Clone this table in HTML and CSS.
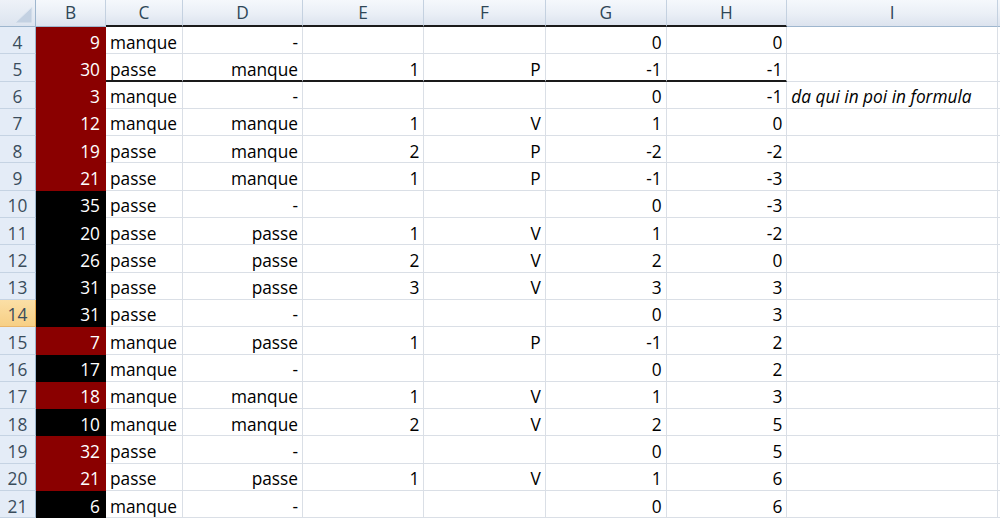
FILE: index.html
```html
<!DOCTYPE html>
<html lang="it">
<head>
<meta charset="utf-8">
<title>Foglio</title>
<link rel="stylesheet" href="styles.css">
</head>
<body>
<div class="sheet">
  <div class="corner"><svg width="36" height="27" viewBox="0 0 36 27"><polygon points="32,7 32,23 15,23" fill="#c3d1e2"/><polygon points="32,7 32,23 15,23" fill="none" stroke="#dfe7f1" stroke-width="1"/></svg></div>
  <div class="ch">B</div>
  <div class="ch k">C</div>
  <div class="ch k">D</div>
  <div class="ch k">E</div>
  <div class="ch k">F</div>
  <div class="ch k">G</div>
  <div class="ch k">H</div>
  <div class="ch">I</div>
  <div class="ch"></div>

  <div class="rh">4</div><div class="c b red">9</div><div class="c l">manque</div><div class="c">-</div><div class="c"></div><div class="c"></div><div class="c">0</div><div class="c">0</div><div class="c l"></div><div class="c"></div>
  <div class="rh">5</div><div class="c b red">30</div><div class="c l k2">passe</div><div class="c k2">manque</div><div class="c k2">1</div><div class="c k2">P</div><div class="c k2">-1</div><div class="c k2">-1</div><div class="c l"></div><div class="c"></div>
  <div class="rh">6</div><div class="c b red">3</div><div class="c l">manque</div><div class="c">-</div><div class="c"></div><div class="c"></div><div class="c">0</div><div class="c">-1</div><div class="c l it">da qui in poi in formula</div><div class="c"></div>
  <div class="rh">7</div><div class="c b red">12</div><div class="c l">manque</div><div class="c">manque</div><div class="c">1</div><div class="c">V</div><div class="c">1</div><div class="c">0</div><div class="c l"></div><div class="c"></div>
  <div class="rh">8</div><div class="c b red">19</div><div class="c l">passe</div><div class="c">manque</div><div class="c">2</div><div class="c">P</div><div class="c">-2</div><div class="c">-2</div><div class="c l"></div><div class="c"></div>
  <div class="rh">9</div><div class="c b red">21</div><div class="c l">passe</div><div class="c">manque</div><div class="c">1</div><div class="c">P</div><div class="c">-1</div><div class="c">-3</div><div class="c l"></div><div class="c"></div>
  <div class="rh">10</div><div class="c b blk">35</div><div class="c l">passe</div><div class="c">-</div><div class="c"></div><div class="c"></div><div class="c">0</div><div class="c">-3</div><div class="c l"></div><div class="c"></div>
  <div class="rh">11</div><div class="c b blk">20</div><div class="c l">passe</div><div class="c">passe</div><div class="c">1</div><div class="c">V</div><div class="c">1</div><div class="c">-2</div><div class="c l"></div><div class="c"></div>
  <div class="rh">12</div><div class="c b blk">26</div><div class="c l">passe</div><div class="c">passe</div><div class="c">2</div><div class="c">V</div><div class="c">2</div><div class="c">0</div><div class="c l"></div><div class="c"></div>
  <div class="rh">13</div><div class="c b blk">31</div><div class="c l">passe</div><div class="c">passe</div><div class="c">3</div><div class="c">V</div><div class="c">3</div><div class="c">3</div><div class="c l"></div><div class="c"></div>
  <div class="rh sel">14</div><div class="c b blk">31</div><div class="c l">passe</div><div class="c">-</div><div class="c"></div><div class="c"></div><div class="c">0</div><div class="c">3</div><div class="c l"></div><div class="c"></div>
  <div class="rh">15</div><div class="c b red">7</div><div class="c l">manque</div><div class="c">passe</div><div class="c">1</div><div class="c">P</div><div class="c">-1</div><div class="c">2</div><div class="c l"></div><div class="c"></div>
  <div class="rh">16</div><div class="c b blk">17</div><div class="c l">manque</div><div class="c">-</div><div class="c"></div><div class="c"></div><div class="c">0</div><div class="c">2</div><div class="c l"></div><div class="c"></div>
  <div class="rh">17</div><div class="c b red">18</div><div class="c l">manque</div><div class="c">manque</div><div class="c">1</div><div class="c">V</div><div class="c">1</div><div class="c">3</div><div class="c l"></div><div class="c"></div>
  <div class="rh">18</div><div class="c b blk">10</div><div class="c l">manque</div><div class="c">manque</div><div class="c">2</div><div class="c">V</div><div class="c">2</div><div class="c">5</div><div class="c l"></div><div class="c"></div>
  <div class="rh">19</div><div class="c b red">32</div><div class="c l">passe</div><div class="c">-</div><div class="c"></div><div class="c"></div><div class="c">0</div><div class="c">5</div><div class="c l"></div><div class="c"></div>
  <div class="rh">20</div><div class="c b red">21</div><div class="c l">passe</div><div class="c">passe</div><div class="c">1</div><div class="c">V</div><div class="c">1</div><div class="c">6</div><div class="c l"></div><div class="c"></div>
  <div class="rh">21</div><div class="c b blk">6</div><div class="c l">manque</div><div class="c">-</div><div class="c"></div><div class="c"></div><div class="c">0</div><div class="c">6</div><div class="c l"></div><div class="c"></div>
</div>
</body>
</html>
```

FILE: styles.css
```css
html, body {
  margin: 0;
  padding: 0;
  background: #ffffff;
  overflow: hidden;
}

.sheet {
  display: grid;
  grid-template-columns: 36px 70px 77px 120px 121.3px 121.4px 121px 120.6px 210.7px 1fr;
  grid-template-rows: 27px repeat(18, 27.3px);
  width: 1000px;
  height: 521px;
  overflow: hidden;
  font-family: "Open Sans", "Liberation Sans", sans-serif;
  font-size: 17.3px;
  color: #000;
}

.corner {
  box-sizing: border-box;
  background: linear-gradient(#eef2f8, #dce4ef);
  border-right: 1px solid #9eb6ce;
  border-bottom: 1px solid #9eb6ce;
}
.corner svg { display: block; }

.ch {
  box-sizing: border-box;
  background: linear-gradient(#f5f8fc 0%, #eaeff6 55%, #dce3ee 100%);
  border-right: 1px solid #c4d1e0;
  border-bottom: 1px solid #9eb6ce;
  text-align: center;
  line-height: 26px;
  color: #2e4656;
}
.ch.k { border-bottom: 2px solid #1a1a1a; line-height: 25px; }

.rh {
  box-sizing: border-box;
  background: #e4ecf7;
  border-right: 1px solid #9eb6ce;
  border-bottom: 1px solid #c5d3e3;
  text-align: center;
  color: #3a4c5c;
  padding-top: 3.5px;
  line-height: 23px;
}
.rh.sel {
  background: linear-gradient(#fbdfa6, #f7cf85);
  border-right-color: #e3a74d;
  border-bottom-color: #e9b56a;
}

.c {
  box-sizing: border-box;
  border-right: 1px solid #dadfe6;
  border-bottom: 1px solid #dadfe6;
  padding: 3.5px 4px 0 4px;
  line-height: 23px;
  white-space: nowrap;
  text-align: right;
  min-width: 0;
}
.c.l { text-align: left; }
.c.it { font-style: italic; overflow: visible; }
.c.k2 { border-bottom: 2px solid #1a1a1a; }

.c.b { color: #ffffff; border-right-color: transparent; border-bottom: 0; padding-right: 5px; }
.c.red { background: #8a0000; }
.c.blk { background: #000000; }
```
